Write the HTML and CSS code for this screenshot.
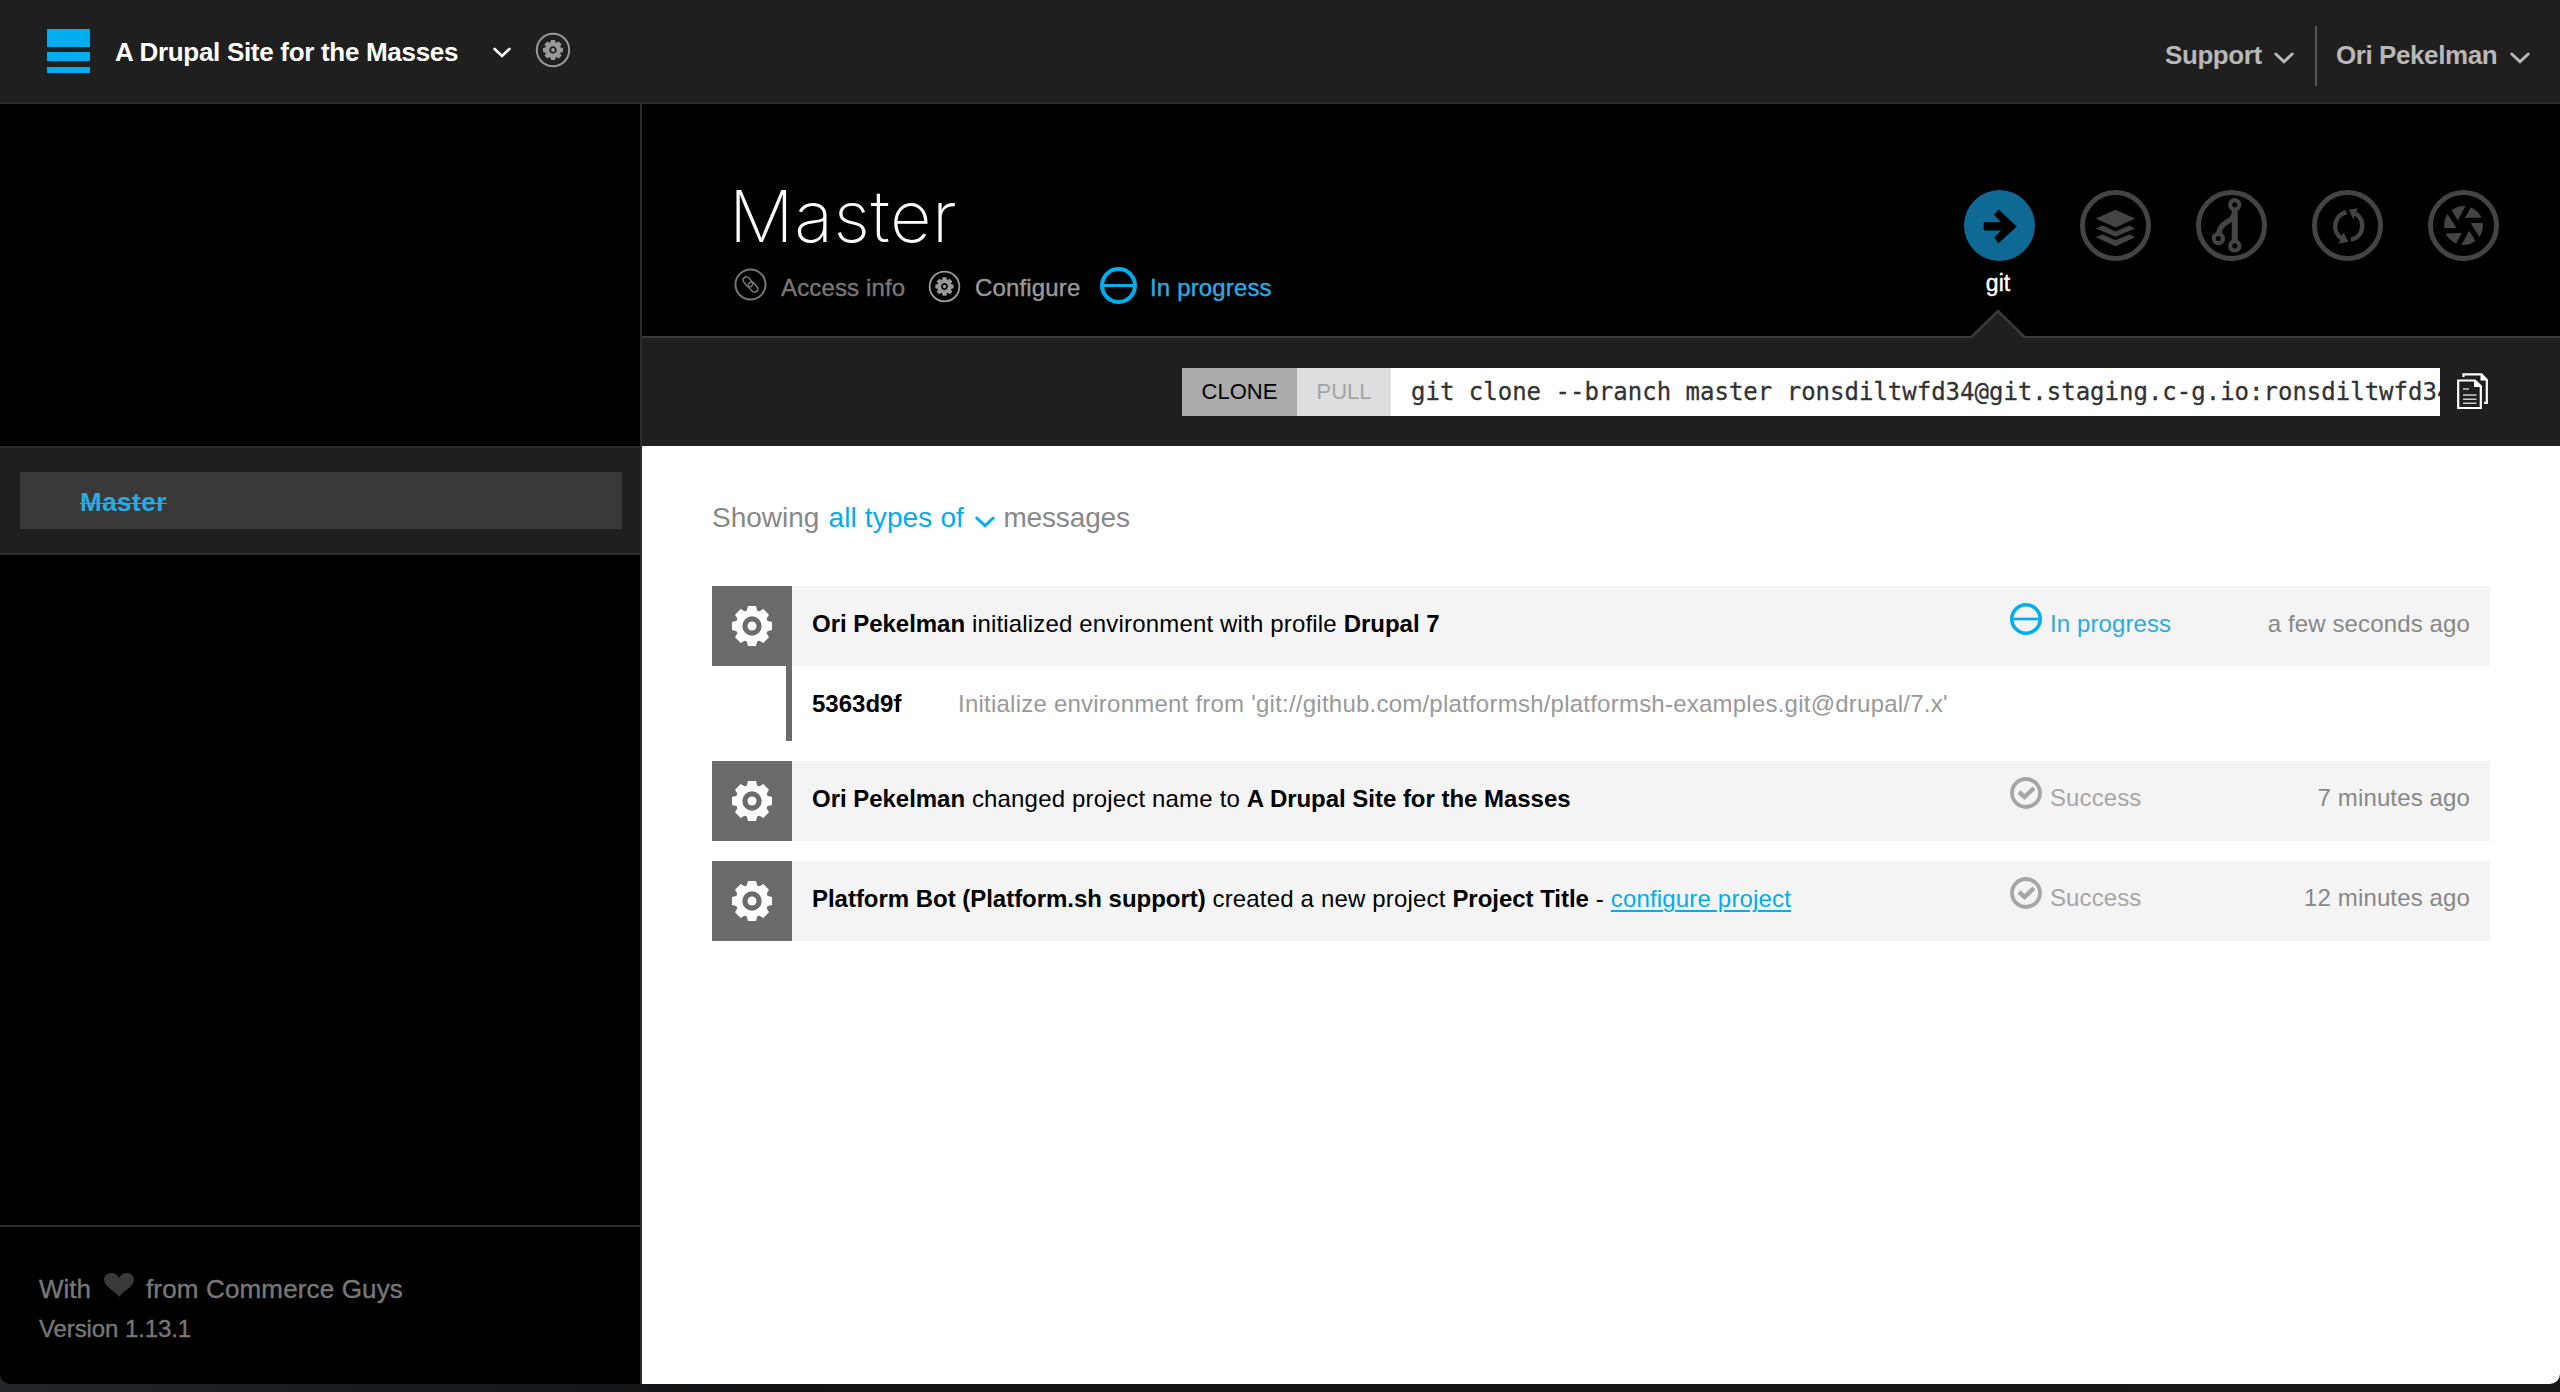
FILE: index.html
```
<!DOCTYPE html>
<html lang="en">
<head>
<meta charset="utf-8">
<title>Master - A Drupal Site for the Masses</title>
<link rel="stylesheet" href="styles.css">
</head>
<body>
<svg class="defs" aria-hidden="true">
  <defs>
    <path id="tooth" d="M-5.6,-14 L-4,-20 H4 L5.6,-14 Z"/>
    <g id="teeth">
      <use href="#tooth"/><use href="#tooth" transform="rotate(45)"/><use href="#tooth" transform="rotate(90)"/><use href="#tooth" transform="rotate(135)"/>
      <use href="#tooth" transform="rotate(180)"/><use href="#tooth" transform="rotate(225)"/><use href="#tooth" transform="rotate(270)"/><use href="#tooth" transform="rotate(315)"/>
    </g>
    <symbol id="gear" viewBox="-20 -20 40 40">
      <use href="#teeth"/><circle r="13" fill="none" stroke="currentColor" stroke-width="6.6"/><circle r="4.5"/>
    </symbol>
    <symbol id="gear-ring" viewBox="-18 -18 36 36">
      <circle r="16.2" fill="none" stroke="currentColor" stroke-width="2"/>
      <g transform="scale(.5)"><use href="#teeth"/><circle r="11.6" fill="none" stroke="currentColor" stroke-width="8.4"/><circle r="3.8"/></g>
    </symbol>
    <symbol id="progress" viewBox="-18 -18 36 36">
      <circle r="16" fill="none" stroke="currentColor" stroke-width="4"/><path d="M-16,0H16" stroke="currentColor" stroke-width="3"/>
    </symbol>
    <symbol id="check" viewBox="-16 -16 32 32">
      <circle r="14" fill="none" stroke="currentColor" stroke-width="3.8"/><path d="M-7,-1 L-1.5,4 L8,-5" fill="none" stroke="currentColor" stroke-width="4.4"/>
    </symbol>
    <symbol id="chevron" viewBox="0 0 20 12">
      <path d="M1.8,2 L10,9.8 L18.2,2" fill="none" stroke="currentColor" stroke-width="3" stroke-linecap="round"/>
    </symbol>
    <path id="blade" d="M-12,-15.5 A19.8,19.8 0 0 1 2,-19.8 L-5.8,-5 Z"/>
  </defs>
</svg>
<div class="window">
  <header class="topbar">
    <svg class="logo" viewBox="0 0 43 44"><path d="M0,0H43V18H0zM0,23H43V32H0zM0,38H43V44H0z"/></svg>
    <span class="site-name">A Drupal Site for the Masses</span>
    <svg class="site-chevron"><use href="#chevron"/></svg>
    <svg class="site-gear"><use href="#gear-ring"/></svg>
    <nav class="account">
      <span class="support">Support</span><svg class="chev"><use href="#chevron"/></svg>
      <span class="divider"></span>
      <span class="user">Ori Pekelman</span><svg class="chev"><use href="#chevron"/></svg>
    </nav>
  </header>
  <div class="columns">
    <aside class="sidebar">
      <div class="tree"><div class="branch"><s>Master</s></div></div>
      <footer class="credits">
        <div class="made"><span>With</span><svg class="heart" viewBox="0 0 30 24"><path d="M15,24 C12,18.500 0,14 0,6.800 C0,2.500 3.500,0 7.500,0 C11,0 14,2 15,5.500 C16,2 19,0 22.500,0 C26.500,0 30,2.500 30,6.800 C30,14 18,18.500 15,24Z"/></svg><span class="from">from Commerce Guys</span></div>
        <div class="version">Version 1.13.1</div>
      </footer>
    </aside>
    <main class="main">
      <section class="env">
        <div class="env-info">
          <h1>Master</h1>
          <div class="env-links">
            <span class="env-link access"><svg class="i-link" viewBox="-17 -17 34 34"><g fill="none" stroke="currentColor"><circle r="15.500" stroke-width="2"/><g transform="rotate(-40)" stroke-width="1.500"><rect x="-3.700" y="-9.500" width="6.800" height="11.500" rx="3.400"/><rect x="-3.100" y="-2" width="6.800" height="11.500" rx="3.400"/></g></g></svg>Access info</span>
            <span class="env-link configure"><svg class="i-gear"><use href="#gear-ring"/></svg>Configure</span>
            <span class="env-link running"><svg class="i-progress"><use href="#progress"/></svg>In progress</span>
          </div>
        </div>
        <div class="tools">
          <div class="tool active">
            <svg viewBox="-36 -36 72 72"><circle class="disc" r="36"/><path class="arrow" d="M-16,-3.300H1.500L-5.500,-11L-.8,-16.300L17.500,1L-.8,18L-5.500,12.500L1.500,5H-16Z"/></svg>
            <span class="label">git</span>
            <svg class="pointer" viewBox="0 0 54 30"><path class="fill" d="M2,28L27,3L52,28V30H2Z"/><path class="edge" d="M0.500,29L27,3L53.500,29"/></svg>
          </div>
          <div class="tool"><svg viewBox="-36 -36 72 72"><circle class="ring" r="33.500"/><path d="M0,-16L20,-7L0,2L-20,-7ZM-20,3L-13,0L0,6L14,0L20,3L0,11.500ZM-20,12L-13,9L0,15L14,9L20,12L0,21Z"/></svg></div>
          <div class="tool"><svg viewBox="-36 -36 72 72"><circle class="ring" r="33.500"/><g fill="none" stroke="currentColor"><g stroke-width="4.200"><circle cx="3.300" cy="-21" r="4.700"/><circle cx="3.300" cy="20.700" r="4.700"/><circle cx="-13.300" cy="13.300" r="4.700"/></g><path stroke-width="6" d="M3.300,-15.500V15.500"/><path stroke-width="5.400" d="M3,-13C3,-3 -12,-5 -12.800,8.500"/></g></svg></div>
          <div class="tool"><svg viewBox="-36 -36 72 72"><circle class="ring" r="33.500"/><path fill="none" stroke="currentColor" stroke-width="4.600" d="M-1,-13.500A14,14.500 0 0 0 -6,13M3.500,14.500A14,14.500 0 0 0 8.500,-12"/><path d="M-4,7L1,16.500L-9,18.500ZM1.500,-16L10.500,-17.500L6,-6Z"/></svg></div>
          <div class="tool"><svg viewBox="-36 -36 72 72"><circle class="ring" r="33.500"/><use href="#blade"/><use href="#blade" transform="rotate(60)"/><use href="#blade" transform="rotate(120)"/><use href="#blade" transform="rotate(180)"/><use href="#blade" transform="rotate(240)"/><use href="#blade" transform="rotate(300)"/></svg></div>
        </div>
      </section>
      <section class="gitbar">
        <span class="tab clone">CLONE</span><span class="tab pull">PULL</span>
        <code class="command">git clone --branch master ronsdiltwfd34@git.staging.c-g.io:ronsdiltwfd34</code>
        <svg class="copy" viewBox="0 0 31 37"><path class="page" d="M6.500,4V1.300H24.500L29.800,7V29.800H27"/><path d="M23.500,0.500L30.500,7.500H23.500Z"/><path class="page" d="M1.200,7.500H18L23.800,13.300V35H1.200Z"/><path d="M17,6.500L25,14H17Z"/><path class="lines" d="M6,16H12M6,22H19.500M6,26.300H19.500M6,30.300H19.500"/></svg>
      </section>
      <section class="feed">
        <div class="filter"><span>Showing</span><span class="types">all types of</span><svg class="filter-chev"><use href="#chevron"/></svg><span class="msgs">messages</span></div>
        <article class="item">
          <div class="row">
            <div class="kind"><svg><use href="#gear"/></svg></div>
            <div class="text"><b>Ori Pekelman</b> initialized environment with profile <b>Drupal 7</b></div>
            <div class="status running"><svg><use href="#progress"/></svg>In progress</div>
            <time>a few seconds ago</time>
          </div>
          <div class="commit"><b>5363d9f</b><span>Initialize environment from 'git://github.com/platformsh/platformsh-examples.git@drupal/7.x'</span></div>
        </article>
        <article class="item">
          <div class="row raised">
            <div class="kind"><svg><use href="#gear"/></svg></div>
            <div class="text"><b>Ori Pekelman</b> changed project name to <b>A Drupal Site for the Masses</b></div>
            <div class="status"><svg><use href="#check"/></svg>Success</div>
            <time>7 minutes ago</time>
          </div>
        </article>
        <article class="item">
          <div class="row raised">
            <div class="kind"><svg><use href="#gear"/></svg></div>
            <div class="text"><b>Platform Bot (Platform.sh support)</b> created a new project <b>Project Title</b> - <a>configure project</a></div>
            <div class="status"><svg><use href="#check"/></svg>Success</div>
            <time>12 minutes ago</time>
          </div>
        </article>
      </section>
    </main>
  </div>
</div>
</body>
</html>
```
FILE: styles.css
```
* { box-sizing: border-box; }
body {
  margin: 0;
  height: 1392px;
  overflow: hidden;
  background: linear-gradient(90deg, #222628, #101214 30%, #16181a);
  font-family: "Liberation Sans", Arial, sans-serif;
  font-size: 24px;
  color: #000;
}
svg { display: block; flex: none; fill: currentColor; overflow: visible; }
.defs { position: absolute; width: 0; height: 0; }
.window {
  height: 1384px;
  display: flex;
  flex-direction: column;
  background: #000;
  border-radius: 0 0 10px 10px;
  overflow: hidden;
}

/* top bar */
.topbar {
  flex: none;
  height: 104px;
  display: flex;
  align-items: flex-start;
  padding: 0 30px 0 47px;
  background: #1f1f1f;
  border-bottom: 2px solid #2b2b2b;
  font-size: 26px;
  font-weight: bold;
  white-space: nowrap;
}
.logo { width: 43px; height: 44px; margin-top: 29px; color: #00adef; }
.site-name { width: 378px; margin-left: 25px; line-height: 104px; letter-spacing: -.3px; color: #fff; }
.site-chevron { width: 18px; height: 11px; margin-top: 47px; color: #fff; }
.site-gear { width: 36px; height: 36px; margin: 32px 0 0 24px; color: #999; }
.account { margin-left: auto; display: flex; line-height: 110px; color: #b8b8b8; letter-spacing: -.42px; }
.account .chev { width: 20px; height: 12px; margin-top: 52px; }
.support { width: 109px; }
.divider { width: 2px; height: 60px; margin: 26px 19px 0 21px; background: #555; }
.user { width: 174px; }

/* sidebar */
.columns { flex: 1; display: flex; }
.sidebar {
  flex: none;
  width: 642px;
  display: flex;
  flex-direction: column;
  justify-content: space-between;
  padding-top: 342px;
  border-right: 2px solid #2b2b2b;
}
.tree { height: 109px; padding: 24px 18px 24px 20px; background: #1f1f1f; border: solid #2b2b2b; border-width: 2px 0; }
.branch { height: 57px; padding-left: 60px; background: #393939; color: #29abe2; font-size: 26px; font-weight: bold; line-height: 60px; letter-spacing: .5px; }
.branch s { text-decoration-thickness: 1px; }
.credits { height: 159px; padding: 42px 0 0 39px; border-top: 2px solid #2b2b2b; color: #777; -webkit-text-stroke: .4px; }
.made { display: flex; height: 40px; font-size: 26px; line-height: 40px; }
.heart { width: 30px; height: 24px; margin: 4px 12px 0 13px; color: #393939; }
.from { letter-spacing: .15px; }
.version { line-height: 40px; letter-spacing: -.1px; }

/* environment heading */
.main { flex: 1; min-width: 0; display: flex; flex-direction: column; background: #fff; }
.env { height: 234px; display: flex; justify-content: space-between; padding: 0 39px 0 86px; background: #000; border-bottom: 2px solid #3a3a3a; }
.env-info { padding-top: 72px; }
h1 { margin: 0 0 0 1px; font: 230 72px/80px Inter, sans-serif; letter-spacing: .6px; color: #fff; }
.env-links { display: grid; grid-template-columns: 194px 172px auto; height: 64px; padding-left: 6px; }
.env-link { display: flex; align-items: center; white-space: nowrap; letter-spacing: .15px; -webkit-text-stroke: .4px; }
.access { color: #777; }
.configure { color: #999; }
.env-link.running { color: #29abe2; }
.i-link { width: 33px; height: 33px; margin: 0 14px 7px 0; }
.i-gear { width: 33px; height: 33px; margin: 0 14px 3px 0; }
.i-progress { width: 37px; height: 37px; margin: 0 13px 5px 0; color: #00adef; }
.tools { display: flex; padding-top: 86px; color: #444; }
.tool { position: relative; width: 116px; display: flex; flex-direction: column; align-items: center; }
.tool > svg { width: 71px; height: 71px; }
.ring { fill: none; stroke: currentColor; stroke-width: 5; }
.disc { fill: #0e6a94; }
.arrow { fill: #000; }
.label { margin: 7px 2px 0 0; font-size: 23px; line-height: 30px; color: #fff; -webkit-text-stroke: .4px; }
.tool > .pointer { position: absolute; left: 30px; bottom: -2px; width: 54px; height: 30px; }
.pointer .fill { fill: #1f1f1f; }
.pointer .edge { fill: none; stroke: #3a3a3a; stroke-width: 2.5; }

/* git command */
.gitbar { height: 108px; display: flex; justify-content: flex-end; padding: 30px 72px 0 0; background: #1f1f1f; }
.tab { height: 48px; text-align: center; font-size: 22px; line-height: 48px; }
.clone { width: 115px; background: #ababab; }
.pull { width: 94px; background: #dedede; color: #a4a4a4; }
.command { width: 1049px; height: 48px; padding-left: 20px; overflow: hidden; white-space: nowrap; background: #fff; color: #333; font: 24px/49px "DejaVu Sans Mono", monospace; -webkit-text-stroke: .3px; }
.copy { width: 31px; height: 37px; margin: 5px 0 0 17px; color: #fff; }
.page { fill: none; stroke: currentColor; stroke-width: 2.2; }
.lines { fill: none; stroke: #ccc; stroke-width: 1.4; }

/* activity feed */
.feed { flex: 1; padding: 52px 70px 0; }
.filter { display: flex; height: 40px; margin-bottom: 48px; font-size: 28px; line-height: 40px; color: #888; }
.types { width: 136px; margin-left: 9px; color: #00adef; letter-spacing: .15px; }
.filter-chev { width: 20px; height: 12px; margin: 18px 8px 0 11px; color: #00adef; }
.msgs { letter-spacing: -.15px; }
.item { margin-bottom: 20px; }
.row { display: flex; height: 80px; background: #f4f4f4; line-height: 76px; white-space: nowrap; }
.kind { width: 80px; display: grid; place-items: center; background: #6b6b6b; color: #fff; }
.kind svg { width: 40px; height: 40px; }
.text { flex: 1; padding-left: 20px; letter-spacing: .17px; }
.text b { letter-spacing: -.03px; }
.text a { color: #00adef; text-decoration: underline; text-decoration-thickness: 2px; text-underline-offset: 3px; }
.status { width: 200px; display: flex; color: #a6a6a6; letter-spacing: .1px; }
.status svg { width: 32px; height: 32px; margin: 17px 8px 0 0; }
.status.running { color: #29abe2; }
.status.running svg { color: #00adef; }
.raised .status svg { margin-top: 16px; }
.raised .status, .raised time { line-height: 74px; }
time { width: 280px; padding-right: 20px; text-align: right; color: #888; letter-spacing: .13px; }
.commit { display: flex; height: 75px; margin-left: 74px; padding-left: 20px; border-left: 6px solid #6b6b6b; line-height: 76px; }
.commit b { width: 146px; }
.commit span { color: #999; letter-spacing: .23px; }
```
